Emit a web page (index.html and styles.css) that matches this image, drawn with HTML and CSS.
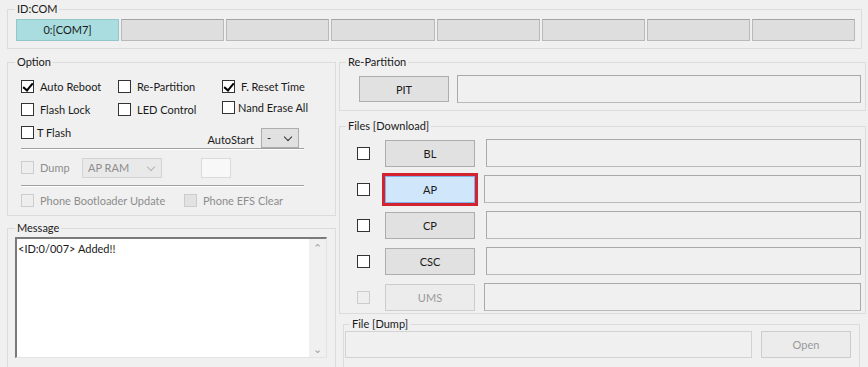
FILE: index.html
```html
<!DOCTYPE html>
<html>

<head>
    <meta charset="UTF-8">
    <title>Odin3</title>
    <link rel="stylesheet" href="styles.css">
</head>

<body>
    <fieldset class="group idcom">
        <legend>ID:COM</legend>
        <div class="slots">
            <div class="slot active">0:[COM7]</div>
            <div class="slot"></div>
            <div class="slot"></div>
            <div class="slot"></div>
            <div class="slot"></div>
            <div class="slot"></div>
            <div class="slot"></div>
            <div class="slot"></div>
        </div>
    </fieldset>

    <div class="columns">
        <div class="col-left">
            <fieldset class="group option">
                <legend>Option</legend>
                <div class="opt-grid">
                    <label class="chk"><span class="box checked"></span>Auto Reboot</label>
                    <label class="chk"><span class="box"></span>Re-Partition</label>
                    <label class="chk"><span class="box checked"></span>F. Reset Time</label>
                    <label class="chk"><span class="box"></span>Flash Lock</label>
                    <label class="chk"><span class="box"></span>LED Control</label>
                    <label class="chk tight up"><span class="box"></span>Nand Erase All</label>
                </div>
                <div class="opt-row3">
                    <label class="chk tight"><span class="box"></span>T Flash</label>
                    <div class="autostart">
                        <span>AutoStart</span>
                        <div class="combo small">-<span class="arrow"></span></div>
                    </div>
                </div>
                <div class="sep"></div>
                <div class="dump-row">
                    <label class="chk off"><span class="box"></span>Dump</label>
                    <div class="combo wide off">AP RAM<span class="arrow"></span></div>
                    <div class="mini-box"></div>
                </div>
                <div class="sep"></div>
                <div class="phone-row">
                    <label class="chk off"><span class="box"></span>Phone Bootloader Update</label>
                    <label class="chk off dark"><span class="box"></span>Phone EFS Clear</label>
                </div>
            </fieldset>

            <fieldset class="group message">
                <legend>Message</legend>
                <div class="msg-box">
                    <div class="msg-text">&lt;ID:0/007&gt; Added!!</div>
                    <div class="scroll">
                        <span class="sarrow">&#8963;</span>
                        <span class="sarrow">&#8964;</span>
                    </div>
                </div>
            </fieldset>
        </div>

        <div class="col-right">
            <fieldset class="group repart">
                <legend>Re-Partition</legend>
                <div class="pit-row">
                    <button class="btn">PIT</button>
                    <div class="field"></div>
                </div>
            </fieldset>

            <fieldset class="group files">
                <legend>Files [Download]</legend>
                <div class="file-row">
                    <span class="box"></span>
                    <button class="btn">BL</button>
                    <div class="field"></div>
                </div>
                <div class="file-row">
                    <span class="box"></span>
                    <button class="btn hot">AP</button>
                    <div class="field shift"></div>
                </div>
                <div class="file-row">
                    <span class="box"></span>
                    <button class="btn">CP</button>
                    <div class="field"></div>
                </div>
                <div class="file-row">
                    <span class="box"></span>
                    <button class="btn">CSC</button>
                    <div class="field"></div>
                </div>
                <div class="file-row off">
                    <span class="box"></span>
                    <button class="btn">UMS</button>
                    <div class="field shift"></div>
                </div>
            </fieldset>

            <fieldset class="group dumpfile">
                <legend>File [Dump]</legend>
                <div class="open-row">
                    <div class="field pale"></div>
                    <button class="btn off">Open</button>
                </div>
            </fieldset>
        </div>
    </div>
</body>

</html>
```

FILE: styles.css
```css
body {
    margin: 0;
    padding: 2px 6px 0 7px;
    background-color: #f0f0f0;
    font-family: "Lato", "Noto Sans", sans-serif;
    font-size: 11px;
    color: #1a1a1a;
    width: 868px;
    height: 367px;
    box-sizing: border-box;
    overflow: hidden;
}

/* group boxes */
.group {
    margin: 0;
    padding: 0;
    border: 1px solid #dcdcdc;
    min-width: 0;
}

.group legend {
    padding: 0 2px;
    line-height: 14px;
}

/* ID:COM */
.idcom {
    padding: 3px 6px 7px 8px;
}

.idcom legend {
    margin-left: -1px;
}

.slots {
    display: grid;
    grid-template-columns: repeat(8, 1fr);
    gap: 2px;
}

.slot {
    height: 22px;
    box-sizing: border-box;
    background-color: #dedede;
    border: 1px solid #b9b9b9;
    border-top-color: #a3a3a3;
    text-align: center;
    line-height: 20px;
}

.slot.active {
    background-color: #a9dde0;
    border-color: #93c7ca;
}

.columns {
    display: flex;
    gap: 3px;
    margin-top: 6px;
}

.col-left {
    width: 329px;
    display: flex;
    flex-direction: column;
    gap: 5px;
}

.col-right {
    flex: 1;
    margin-right: -4px;
    display: flex;
    flex-direction: column;
}

/* checkboxes */
.box {
    display: inline-block;
    width: 13px;
    height: 13px;
    box-sizing: border-box;
    border: 1px solid #333;
    background-color: #fff;
    flex: none;
    position: relative;
}

.box.checked::after {
    content: "";
    position: absolute;
    left: 3px;
    top: 0px;
    width: 4px;
    height: 8px;
    border: solid #000;
    border-width: 0 2px 2px 0;
    transform: rotate(40deg);
}

.chk {
    display: flex;
    align-items: center;
    gap: 6px;
    white-space: nowrap;
}

.chk.tight {
    gap: 3px;
}

.chk.up {
    margin-top: -4px;
}

.chk.off {
    color: #8d8d8d;
}

.chk.off .box,
.file-row.off .box {
    border-color: #cccccc;
    background-color: #eeeeee;
}

.chk.dark .box {
    background-color: #e2e2e2;
}

/* option group */
.option {
    padding: 6px 0 0 13px;
    height: 161px;
    box-sizing: border-box;
}

.option legend {
    margin-left: -6px;
}

.opt-grid {
    display: grid;
    grid-template-columns: 97px 104px auto;
    grid-auto-rows: 23px;
}

.opt-row3 {
    display: flex;
    justify-content: space-between;
    width: 278px;
    height: 27px;
}

.opt-row3 .chk {
    align-self: flex-start;
    height: 22px;
}

.autostart {
    display: flex;
    align-items: flex-end;
    gap: 7px;
}

.autostart span {
    line-height: 16px;
}

.combo {
    height: 20px;
    box-sizing: border-box;
    border: 1px solid #adadad;
    background-color: #e1e1e1;
    padding-left: 5px;
    line-height: 18px;
    position: relative;
}

.combo.small {
    width: 38px;
}

.combo.wide {
    width: 80px;
}

.combo.off {
    border-color: #d3d3d3;
    background-color: #e9e9e9;
    color: #8d8d8d;
}

.combo .arrow {
    position: absolute;
    right: 7px;
    top: 5px;
    width: 5px;
    height: 5px;
    border: solid #333;
    border-width: 0 1.5px 1.5px 0;
    transform: rotate(45deg);
}

.combo.off .arrow {
    border-color: #b5b5b5;
}

.sep {
    width: 283px;
    height: 0;
    border-top: 1px solid #a0a0a0;
    border-bottom: 1px solid #fff;
}

.dump-row {
    display: flex;
    align-items: center;
    height: 35px;
}

.dump-row .chk {
    width: 61px;
}

.mini-box {
    width: 30px;
    height: 20px;
    box-sizing: border-box;
    margin-left: 39px;
    border: 1px solid #dadada;
    background-color: #f8f8f8;
}

.phone-row {
    display: flex;
    align-items: center;
    height: 26px;
    gap: 0;
}

.phone-row .chk:first-child {
    width: 163px;
}

/* message */
.message {
    flex: 1;
    padding: 2px 8px 9px 7px;
}

.message legend {
    margin-left: 0;
}

.msg-box {
    height: 118px;
    display: flex;
    background-color: #fff;
    border-top: 2px solid #7a7a7a;
    border-left: 2px solid #7a7a7a;
    border-right: 1px solid #e3e3e3;
    border-bottom: 1px solid #e3e3e3;
}

.msg-text {
    flex: 1;
    padding: 2px 1px;
    line-height: 16px;
}

.scroll {
    width: 17px;
    background-color: #f0f0f0;
    display: flex;
    flex-direction: column;
    justify-content: space-between;
    align-items: center;
    color: #a3a3a3;
    font-size: 11px;
}

.sarrow {
    line-height: 17px;
}

/* right column */
.btn {
    width: 90px;
    height: 27px;
    box-sizing: border-box;
    border: 1px solid #adadad;
    background-color: #e1e1e1;
    font: inherit;
    color: #1a1a1a;
    padding: 0;
    flex: none;
}

.btn.hot {
    background-color: #cfe6fb;
    border-color: #7eb4ea;
    outline: 3px solid #d2232f;
    outline-offset: 0;
}

.btn.off,
.file-row.off .btn {
    color: #9a9a9a;
    border-color: #cccccc;
    background-color: #ececec;
}

.field {
    flex: 1;
    height: 28px;
    box-sizing: border-box;
    border: 1px solid #a9a9a9;
    border-bottom-color: #b9b9b9;
    background-color: #f0f0f0;
}

.field.pale {
    border-color: #d3d3d3;
}

.repart {
    padding: 6px 4px 7px 19px;
}

.repart legend {
    margin-left: -13px;
}

.pit-row {
    display: flex;
    align-items: center;
    gap: 8px;
}

.pit-row .btn {
    height: 26px;
}

.files {
    margin-top: 8px;
    padding: 6px 4px 2px 17px;
    display: flex;
    flex-direction: column;
    gap: 8px;
}

.files legend {
    margin-left: -11px;
}

.file-row {
    display: flex;
    align-items: center;
}

.file-row .box {
    margin-right: 15px;
}

.file-row .field {
    margin-left: 11px;
}

.file-row .field.shift {
    margin-left: 9px;
}

.dumpfile {
    margin: 3px 6px 0 4px;
    padding: 0 8px 3px 1px;
    flex: 1;
}

.dumpfile legend {
    margin-left: 5px;
}

.open-row {
    display: flex;
    gap: 9px;
}

.open-row .field {
    height: 27px;
}
```
